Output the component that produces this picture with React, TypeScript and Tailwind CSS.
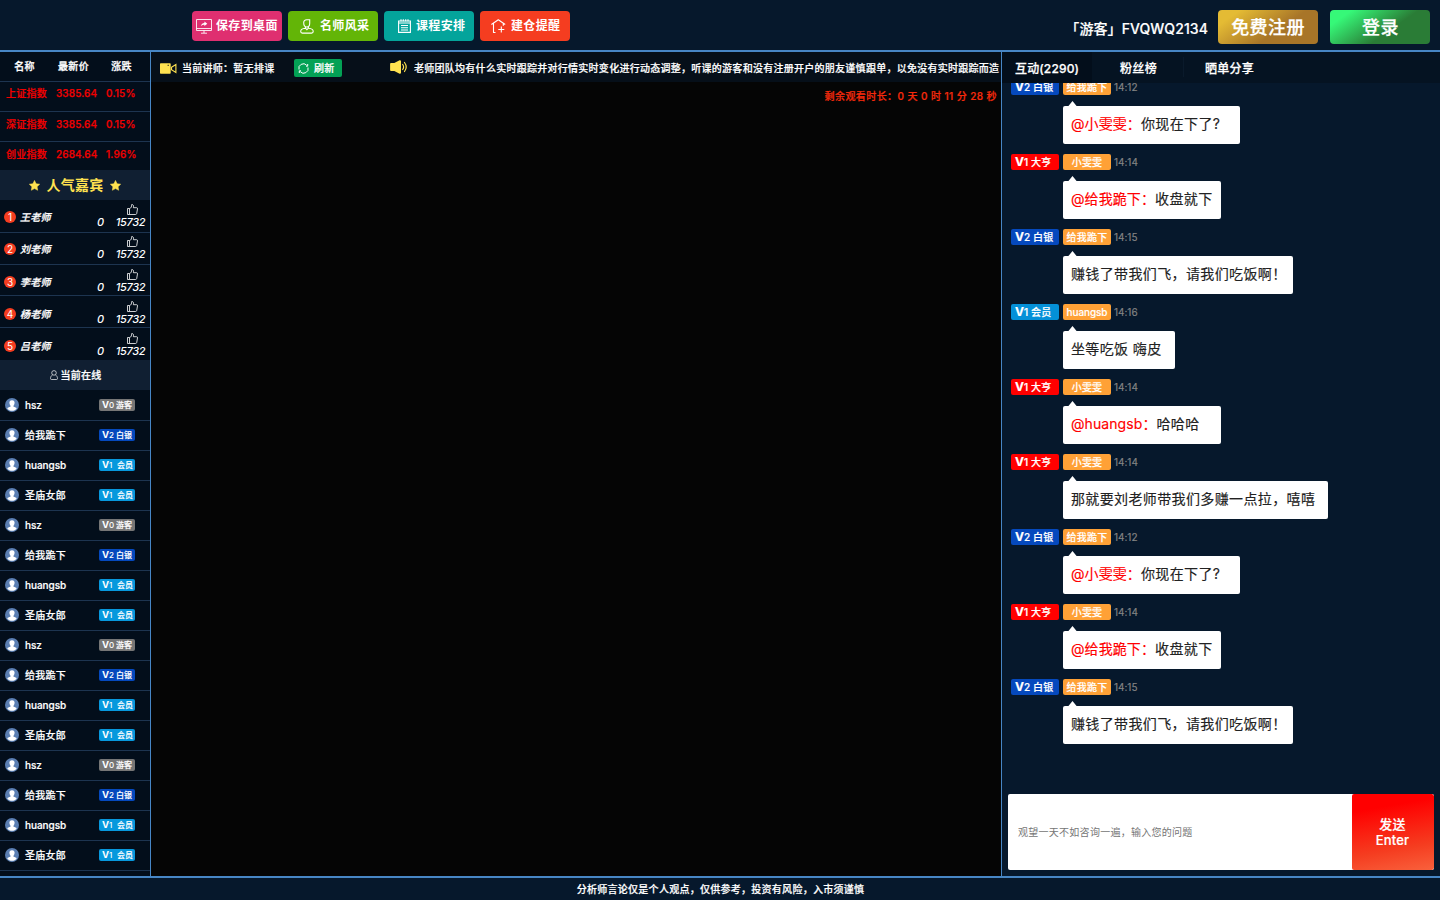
import React from "react";

const stocks = [
  ["上证指数", "3385.64", "0.15%"],
  ["深证指数", "3385.64", "0.15%"],
  ["创业指数", "2684.64", "1.96%"],
];
const stockRows = ["h-[30px] pb-[7px] border-b", "h-[30px] pb-[4px] border-b", "h-[28px] pb-[3px]"];

const teachers = ["王老师", "刘老师", "李老师", "杨老师", "吕老师"];
const teacherRows = [
  "h-[33px] border-b pt-[1px]",
  "h-[32px] border-b pt-0",
  "h-[31px] border-b pt-[1px]",
  "h-[32px] border-b pt-[2px]",
  "h-[32px] pt-[2px]",
];

type Level = { v: string; label: string; bg: string };
const online: (Level & { name: string; gap: string; tracking: string })[] = [
  { name: "hsz", v: "0", label: "游客", bg: "bg-[#767676]", gap: "ml-[2px]", tracking: "tracking-[-0.1px]" },
  { name: "给我跪下", v: "2", label: "白银", bg: "bg-[#0549bd]", gap: "ml-[2px]", tracking: "tracking-[0.27px]" },
  { name: "huangsb", v: "1", label: "会员", bg: "bg-[#0798dd]", gap: "ml-[3px]", tracking: "tracking-[-0.05px]" },
  { name: "圣庙女郎", v: "1", label: "会员", bg: "bg-[#0798dd]", gap: "ml-[3px]", tracking: "tracking-[0.27px]" },
];

const silver: Level = { v: "2", label: "白银", bg: "bg-[#0549bd]" };
const rich: Level = { v: "1", label: "大亨", bg: "bg-[#ff0000]" };
const member: Level = { v: "1", label: "会员", bg: "bg-[#0490d8]" };

type Message = { level: Level; name: string; time: string; at?: string; text: string; width: string };
const baseMessages: Message[] = [
  { level: silver, name: "给我跪下", time: "14:12", at: "@小雯雯：", text: "你现在下了?", width: "w-[177px]" },
  { level: rich, name: "小雯雯", time: "14:14", at: "@给我跪下：", text: "收盘就下", width: "w-[158px]" },
  { level: silver, name: "给我跪下", time: "14:15", text: "赚钱了带我们飞，请我们吃饭啊！", width: "w-[230px]" },
  { level: member, name: "huangsb", time: "14:16", text: "坐等吃饭 嗨皮", width: "w-[112px]" },
  { level: rich, name: "小雯雯", time: "14:14", at: "@huangsb：", text: "哈哈哈", width: "w-[158px]" },
  { level: rich, name: "小雯雯", time: "14:14", text: "那就要刘老师带我们多赚一点拉，嘻嘻", width: "w-[265px]" },
];
const messages = [...baseMessages, ...baseMessages.slice(0, 3)];

const DesktopIcon = () => (
  <svg width="16" height="15" viewBox="0 0 16 15" fill="none" stroke="#fff" strokeWidth="1">
    <path d="M.5.5h15v11H.5zM.5 9.5h15M8 11.5v2.5M5 14.2h6" strokeOpacity=".85" />
    <path d="M5 7c.3-2 1.600-3 3.400-3V2.600L11.300 4.800 8.400 7V5.700C7 5.700 6 6 5 7z" fill="#fff" stroke="none" />
  </svg>
);
const TeacherIcon = () => (
  <svg width="14" height="15" viewBox="0 0 14 15" fill="none" stroke="#fff" strokeWidth="1.1">
    <path d="M3.700 3.800C3.700 1.700 5 .7 6.800.7h2.900v3.500c0 2.200-1.200 3.800-3 3.800s-3-2-3-4.200zM5.400 7.700v1.400L6.900 10.600 8.400 9.100V7.700M5.300 9.300C2.600 9.500.7 10.600.7 12.500c0 1 .6 1.600 1.600 1.600h9.300c1 0 1.600-.6 1.600-1.600 0-1.900-1.900-3-4.600-3.200" />
  </svg>
);
const ScheduleIcon = () => (
  <svg width="13" height="14" viewBox="0 0 13 14" fill="none" stroke="#fff" strokeWidth="1.100">
    <path d="M.6 2h11.800v11.400H.6zM.6 4h11.800M3 6.500h7M3 8.800h7M3 11h7" />
    <path d="M3 .3v2M5.300.3v2M7.700.3v2M10 .3v2" />
  </svg>
);
const HouseIcon = () => (
  <svg width="15" height="14" viewBox="0 0 15 14" fill="none" stroke="#fff" strokeWidth="1.100" strokeLinejoin="round">
    <path d="M.4 5.500 7.300.7l6.900 4.800M2.500 4.500v9H4.500M12.300 4.500v2.300M10.300 7.500v6M7.300 10.500h6" />
  </svg>
);
const CameraIcon = () => (
  <svg width="17" height="11" viewBox="0 0 17 11">
    <path d="M.7.3H10q.7 0 .7.700v9q0 .7-.7.700H.7q-.7 0-.7-.7V1Q0 .3.700.300z" fill="#ffe250" />
    <path d="M11.500 4.200 15.900 1.500v8L11.500 6.800z" fill="none" stroke="#ffe250" strokeWidth="1.100" />
    <path d="M7.500 2.300h1.500" stroke="#08111b" strokeWidth=".8" />
  </svg>
);
const SpeakerIcon = () => (
  <svg width="18" height="14" viewBox="0 0 18 14">
    <path d="M1 3h3.300L9.600.200Q11 0 11 1.200v11.600q0 1.200-1.400 1L4.300 11H1Q.1 11 .1 10V4Q.1 3 1 3z" fill="#ffe250" />
    <path d="M12.700 4.500q1.800 2.500 0 5M14.500 2.500q3.400 4.500 0 9" fill="none" stroke="#ffe250" strokeWidth="1.200" strokeLinecap="round" />
  </svg>
);
const RefreshIcon = () => (
  <svg width="11" height="11" viewBox="0 0 11 11" fill="none" stroke="#fff" strokeWidth="1">
    <path d="M1 6.500A4.500 4.500 0 0 1 8.700 2.300M10 4.500A4.500 4.500 0 0 1 2.300 8.700M9.700 1v2.200H8M1.300 10V7.800H3" />
  </svg>
);
const StarIcon = () => (
  <svg width="11" height="11" viewBox="0 0 11 11">
    <path d="M5.500.4 7.100 3.700l3.600.5-2.600 2.500.6 3.600-3.200-1.700-3.200 1.700.6-3.600L.3 4.200l3.600-.5z" fill="#ffe250" stroke="#ffe250" strokeWidth=".5" strokeLinejoin="round" />
  </svg>
);
const ThumbIcon = () => (
  <svg width="11" height="11" viewBox="0 0 11 11" fill="none" stroke="#fff" strokeWidth=".8" strokeLinejoin="round">
    <path d="M.5 4.500h2v6h-2zM2.500 4.700C4.300 4 4.600 2.600 4.700.500c1.600 0 2.100 1 1.700 3.200h3.200q1.100.1.900 1.200L9.700 9.600q-.3.900-1.200.9h-6" />
  </svg>
);
const PersonIcon = () => (
  <svg width="8" height="10" viewBox="0 0 8 10" fill="none" stroke="#fff" strokeOpacity=".85" strokeWidth=".8">
    <circle cx="4" cy="2.900" r="2.300" />
    <path d="M2.500 5C1.200 5.700.5 7 .5 8.500q0 1 1 1h5q1 0 1-1C7.500 7 6.800 5.700 5.500 5" />
  </svg>
);
const Avatar = () => (
  <svg width="14" height="14" viewBox="0 0 14 14" className="mb-px shrink-0">
    <circle cx="7" cy="7" r="7" fill="#5b7fb3" />
    <path d="M7 2.200c1.800 0 2.700 1.200 2.600 2.900-.1 1.200-.5 2-1.100 2.600v1c1.500.4 2.800.8 3.200 1.700C10.600 12 9 12.700 7 12.700S3.400 12 2.300 10.400c.4-.9 1.700-1.300 3.200-1.700v-1c-.6-.6-1-1.400-1.100-2.600C4.300 3.400 5.200 2.200 7 2.200z" fill="#fff" />
  </svg>
);

const navItems = [
  { label: "保存到桌面", bg: "bg-[#df2f70]", Icon: DesktopIcon, pad: "pl-[4px] gap-[4px]" },
  { label: "名师风采", bg: "bg-[#63b507]", Icon: TeacherIcon, pad: "pl-[12px] gap-[6px]" },
  { label: "课程安排", bg: "bg-[#04a49b]", Icon: ScheduleIcon, pad: "pl-[14px] gap-[5px]" },
  { label: "建仓提醒", bg: "bg-[#f53d20]", Icon: HouseIcon, pad: "pl-[11px] gap-[5px]" },
];

function Sidebar() {
  return (
    <aside className="flex w-[151px] shrink-0 flex-col overflow-hidden border-r border-[#4786c5] bg-[#030e1b] text-[10px] tracking-[0.27px] whitespace-nowrap">
      <div className="flex h-[30px] shrink-0 items-center border-b border-[#1d3450] pb-px font-medium [-webkit-text-stroke:0.3px]">
        <span className="w-[49px] text-center">名称</span>
        <span className="w-[49px] text-center">最新价</span>
        <span className="w-[47px] text-center">涨跌</span>
      </div>
      {stocks.map((row, i) => (
        <div key={row[0]} className={"flex shrink-0 items-center border-[#1d3450] font-medium text-[#f00000] [-webkit-text-stroke:0.25px] " + stockRows[i]}>
          <span className="w-[56px] pl-[6px]">{row[0]}</span>
          <span className="w-[50px] tracking-[0.1px]">{row[1]}</span>
          <span className="tracking-[0.2px]">{row[2]}</span>
        </div>
      ))}
      <div className="flex h-[30px] shrink-0 items-center justify-center gap-[6px] bg-[#101f32] text-[14px] font-bold tracking-[0.3px] text-[#ffe250]">
        <StarIcon />
        <span className="pb-px">人气嘉宾</span>
        <StarIcon />
      </div>
      {teachers.map((name, i) => (
        <div key={name} className={"flex shrink-0 items-start border-[#1d3450] " + teacherRows[i]}>
          <div className="flex w-[92px] shrink-0 items-center pt-[10px] pl-[4px]">
            <span className="flex size-[12px] items-center justify-center rounded-full bg-[#f53d20] text-[10px] leading-none tracking-normal">{i + 1}</span>
            <span className="pl-[4px] leading-[12px] font-medium italic tracking-[0.25px] [-webkit-text-stroke:0.3px]">{name}</span>
          </div>
          <span className="w-[17px] shrink-0 pt-[15px] pl-[5px] text-[11px] leading-[12px] font-medium italic">0</span>
          <div className="flex w-[43px] shrink-0 flex-col items-center">
            <span className="flex h-[15px] items-center pt-[1px] pl-[3px]"><ThumbIcon /></span>
            <span className="text-[11px] leading-[12px] font-medium italic tracking-[-0.35px]">15732</span>
          </div>
        </div>
      ))}
      <div className="flex h-[30px] shrink-0 items-center justify-center gap-[2px] bg-[#101f32] pl-[2px] font-medium [-webkit-text-stroke:0.25px]">
        <PersonIcon />
        当前在线
      </div>
      {Array.from({ length: 17 }, (_, i) => {
        const u = online[i % 4];
        return (
          <div key={i} className={"flex h-[30px] shrink-0 items-center border-t pl-[5px] " + (i ? "border-[#1d3450]" : "border-transparent")}>
            {i < 16 && (
              <>
                <Avatar />
                <span className={"w-[80px] pb-px pl-[6px] font-medium [-webkit-text-stroke:0.2px] " + u.tracking}>{u.name}</span>
                <span className={"mb-px flex h-[12px] w-[36px] items-center rounded-[2px] pl-[3px] text-[8px] leading-[12px] tracking-[-0.1px] " + u.bg}>
                  <b className="w-[7px] text-[9.5px]">V</b>
                  <span className="w-[5px] font-medium">{u.v}</span>
                  <span className={"text-[8px] font-medium [-webkit-text-stroke:0.15px] " + u.gap}>{u.label}</span>
                </span>
              </>
            )}
          </div>
        );
      })}
    </aside>
  );
}

function Chat() {
  return (
    <section className="flex min-w-0 flex-1 flex-col bg-[#06182c] whitespace-nowrap">
      <nav className="flex h-[31px] shrink-0 items-center bg-[#051322] pb-px text-[12px] font-medium tracking-[0.3px] [-webkit-text-stroke:0.25px]">
        <span className="flex h-[31px] w-[90px] items-center bg-[#030e1b] pt-[3px] pl-[13px] tracking-[0.15px]">互动(2290)</span>
        <span className="flex h-[20px] w-[92px] items-center justify-center border-r border-[#0a1a2b] pt-[3px] pl-[2px]">粉丝榜</span>
        <span className="flex h-[20px] w-[90px] items-center justify-center pt-[3px] pl-px">晒单分享</span>
      </nav>
      <div className="min-h-0 flex-1 overflow-hidden pl-[9px]">
        <div className="-mt-1 flex flex-col">
          {messages.map((m, i) => (
            <div key={i} className="h-[75px] shrink-0">
              <div className="flex h-[16px] items-center text-[10px] leading-[16px] tracking-[0.2px]">
                <span className={"flex h-[16px] w-[48px] items-center rounded-[2px] pl-[4px] font-medium [-webkit-text-stroke:0.2px] " + m.level.bg}>
                  <b className="w-[9px] pb-px text-[12px] tracking-normal">V</b>
                  <span className="w-[6px]">{m.level.v}</span>
                  <span className={m.level.v === "2" ? "pl-[3px]" : "pl-px"}>{m.level.label}</span>
                </span>
                <span className={"ml-[4px] h-[16px] w-[48px] rounded-[2px] bg-[#ffa136] text-center font-medium [-webkit-text-stroke:0.15px] " + (m.name === "huangsb" ? "tracking-[-0.1px]" : "")}>{m.name}</span>
                <span className="pl-[3px] tracking-[-0.02px] text-[#848484] [-webkit-text-stroke:0.15px]">{m.time}</span>
              </div>
              <div className={"relative mt-[11px] ml-[52px] flex h-[38px] items-center rounded-[2px] bg-white pb-[3px] pl-[8px] text-[14px] tracking-[0.37px] text-[#222] [-webkit-text-stroke:0.15px] " + m.width}>
                <svg className="absolute -top-[5px] left-[5px]" width="9" height="6" viewBox="0 0 9 6"><path d="M4.500 0 9 5.500H0z" fill="#fff" /></svg>
                {m.at && <span className="tracking-[0.08px] text-[#ff0000]">{m.at}</span>}
                {m.text}
              </div>
            </div>
          ))}
        </div>
      </div>
      <div className="mx-[6px] mb-[6px] flex h-[76px] shrink-0 overflow-hidden rounded-[2px] bg-white">
        <div className="flex flex-1 items-center pl-[10px] text-[10px] tracking-[0.27px] text-[#757575]">观望一天不如咨询一遍，输入您的问题</div>
        <button className="w-[82px] rounded-[2px] bg-linear-[170deg,#ff0000_20%,#f53d20_70%,#f9613c] pr-px pb-px text-[13px] leading-[16px] font-medium tracking-[0.2px] [-webkit-text-stroke:0.2px]">
          发送<br />Enter
        </button>
      </div>
    </section>
  );
}

export default function App() {
  return (
    <div className="flex h-[900px] w-[1440px] flex-col overflow-hidden bg-[#06182c] font-[Inter,'Noto_Sans_CJK_SC',sans-serif] text-white">
      <header className="flex h-[52px] shrink-0 items-start justify-between border-b-2 border-[#4786c5] pr-[10px] pl-[192px] whitespace-nowrap">
        <div className="flex gap-[6px] pt-[11px]">
          {navItems.map(({ label, bg, Icon, pad }) => (
            <div key={label} className={"flex h-[30px] w-[90px] items-center rounded-[4px] text-[12px] font-bold tracking-[0.35px] " + bg + " " + pad}>
              <Icon />
              {label}
            </div>
          ))}
        </div>
        <div className="flex items-start pt-[10px]">
          <span className="pt-[9px] pr-[10px] text-[14px] leading-[20px] font-medium tracking-[0.1px] [-webkit-text-stroke:0.2px]">「游客」FVQWQ2134</span>
          <div className="mr-[12px] flex h-[34px] w-[100px] items-center justify-center rounded-[4px] bg-linear-[145deg,#e4bb34_15%,#a87528_60%] text-[18px] font-medium tracking-[0.4px] [-webkit-text-stroke:0.25px]">免费注册</div>
          <div className="flex h-[34px] w-[100px] items-center justify-center rounded-[4px] bg-linear-[145deg,#36f878_15%,#2a7c36_60%] pl-px text-[18px] font-medium tracking-[0.4px] [-webkit-text-stroke:0.25px]">登录</div>
        </div>
      </header>
      <main className="flex min-h-0 flex-1">
        <Sidebar />
        <section className="flex w-[851px] shrink-0 flex-col border-r border-[#4786c5] bg-[#050505] text-[10px] font-medium tracking-[0.27px] whitespace-nowrap [-webkit-text-stroke:0.22px]">
          <div className="flex h-[30px] shrink-0 items-center overflow-hidden bg-[#060f19] pt-[2px] pl-[9px]">
            <CameraIcon />
            <span className="w-[117px] pl-[5px]">当前讲师：暂无排课</span>
            <span className="flex h-[18px] w-[48px] items-center gap-[5px] rounded-[2px] bg-[#03a155] pl-[4px]"><RefreshIcon />刷新</span>
            <span className="mr-[6px] ml-[48px] pb-[2px]"><SpeakerIcon /></span>
            <span className="w-[586px] shrink-0 overflow-hidden">老师团队均有什么实时跟踪并对行情实时变化进行动态调整，听课的游客和没有注册开户的朋友谨慎跟单，以免没有实时跟踪而造</span>
          </div>
          <div className="pt-[7px] pr-[4px] text-right leading-[15px] tracking-[0.42px] text-[#f52a0c]">剩余观看时长：0 天 0 时 11 分 28 秒</div>
        </section>
        <Chat />
      </main>
      <footer className="flex h-[24px] shrink-0 items-center justify-center border-t-2 border-[#4786c5] pl-px text-[10px] font-medium tracking-[0.27px] [-webkit-text-stroke:0.22px]">
        分析师言论仅是个人观点，仅供参考，投资有风险，入市须谨慎
      </footer>
    </div>
  );
}
